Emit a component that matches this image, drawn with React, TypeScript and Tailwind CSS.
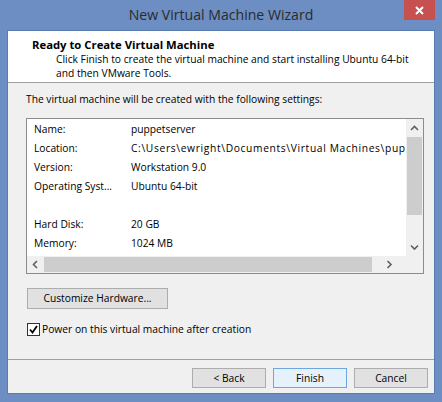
import React from "react";

function Chevron({ dir }: { dir: "up" | "down" | "left" | "right" }) {
  const pts =
    dir === "up"
      ? "1,5 4.5,1.5 8,5"
      : dir === "down"
      ? "1,1.5 4.5,5 8,1.5"
      : dir === "left"
      ? "5,1 1.5,4.5 5,8"
      : "1.5,1 5,4.5 1.5,8";
  const w = dir === "up" || dir === "down" ? 9 : 7;
  const h = dir === "up" || dir === "down" ? 7 : 9;
  return (
    <svg width={w} height={h} viewBox={`0 0 ${w} ${h}`} className="block">
      <polyline points={pts} fill="none" stroke="#606060" strokeWidth="1.6" />
    </svg>
  );
}

const rows: [string, string][] = [
  ["Name:", "puppetserver"],
  ["Location:", "C:\\Users\\ewright\\Documents\\Virtual Machines\\puppetserver"],
  ["Version:", "Workstation 9.0"],
  ["Operating Syst...", "Ubuntu 64-bit"],
  ["", ""],
  ["Hard Disk:", "20 GB"],
  ["Memory:", "1024 MB"],
];

export default function App() {
  return (
    <div className="w-[442px] h-[402px] bg-[#6c8ec3] flex flex-col font-['Open_Sans',sans-serif] text-black overflow-hidden">
      {/* title bar */}
      <div className="relative h-[30px] flex items-center justify-center">
        <span className="text-[14.1px] text-[#2b2b2b] leading-none">New Virtual Machine Wizard</span>
        <div className="absolute right-[7px] top-0 w-[31px] h-[20px] bg-[#c75050] flex items-center justify-center">
          <svg width="9" height="9" viewBox="0 0 9 9">
            <path d="M1 1 L8 8 M8 1 L1 8" stroke="#ffffff" strokeWidth="2" />
          </svg>
        </div>
      </div>

      {/* client */}
      <div className="ml-[7px] w-[428px] h-[364px] border border-[#587bb0] flex flex-col bg-[#f0f0f0]">
        {/* header */}
        <div className="h-[52px] bg-white border-b border-[#a0a0a0] pl-[24px] pt-[6px]">
          <div className="text-[11.3px] font-bold leading-[15px]">Ready to Create Virtual Machine</div>
          <div className="mt-[1px] pl-[24px] text-[10.25px] leading-[13.5px]">
            Click Finish to create the virtual machine and start installing Ubuntu 64-bit
            <br />
            and then VMware Tools.
          </div>
        </div>

        {/* body */}
        <div className="h-[276px] pl-[18px] pt-[10px] flex flex-col">
          <div className="text-[10.25px] leading-[12px]">
            The virtual machine will be created with the following settings:
          </div>

          {/* list box */}
          <div className="mt-[13px] w-[398px] h-[156px] border border-[#8c8c8c] bg-[#f0f0f0] flex flex-col">
            <div className="flex h-[137px]">
              <div className="w-[379px] bg-white pt-[1px] overflow-hidden">
                {rows.map(([k, v], i) => (
                  <div key={i} className="h-[19px] flex items-center text-[10.25px] whitespace-nowrap">
                    <span className="w-[97px] ml-[7px] shrink-0">{k}</span>
                    <span className={i === 1 ? "tracking-[0.65px]" : ""}>{v}</span>
                  </div>
                ))}
              </div>
              {/* vertical scrollbar */}
              <div className="w-[17px] flex flex-col items-center">
                <div className="h-[18px] flex items-center justify-center">
                  <Chevron dir="up" />
                </div>
                <div className="w-[15px] h-[78px] bg-[#cdcdcd]" />
                <div className="flex-1" />
                <div className="h-[18px] flex items-center justify-center">
                  <Chevron dir="down" />
                </div>
              </div>
            </div>
            {/* horizontal scrollbar */}
            <div className="h-[17px] w-[379px] flex items-center">
              <div className="w-[17px] flex items-center justify-center">
                <Chevron dir="left" />
              </div>
              <div className="w-[328px] h-[15px] bg-[#cdcdcd]" />
              <div className="flex-1 flex items-center justify-center">
                <Chevron dir="right" />
              </div>
            </div>
          </div>

          <button className="mt-[14px] ml-[1px] w-[141px] h-[21px] bg-[#e1e1e1] border border-[#adadad] text-[10.25px] leading-none flex items-center justify-center">
            Customize Hardware...
          </button>

          <div className="mt-[14px] ml-[1px] flex items-center gap-[2px]">
            <div className="w-[13px] h-[13px] border border-[#333333] bg-white flex items-center justify-center">
              <svg width="9" height="9" viewBox="0 0 9 9">
                <path d="M1 4.5 L3.5 7.5 L8 1" fill="none" stroke="#000000" strokeWidth="1.8" />
              </svg>
            </div>
            <span className="text-[10.25px] leading-[13px]">Power on this virtual machine after creation</span>
          </div>
        </div>

        {/* footer */}
        <div className="flex-1 border-t border-[#a0a0a0] flex justify-end items-start gap-[7px] pr-[6px] pt-[8px]">
          <button className="w-[74px] h-[20px] bg-[#e1e1e1] border border-[#adadad] text-[10.25px] leading-none flex items-center justify-center">
            &lt; Back
          </button>
          <button className="w-[74px] h-[20px] bg-[#e5f1fb] border border-[#6ea6df] text-[10.25px] leading-none flex items-center justify-center">
            Finish
          </button>
          <button className="w-[74px] h-[20px] bg-[#e1e1e1] border border-[#adadad] text-[10.25px] leading-none flex items-center justify-center">
            Cancel
          </button>
        </div>
      </div>
    </div>
  );
}
